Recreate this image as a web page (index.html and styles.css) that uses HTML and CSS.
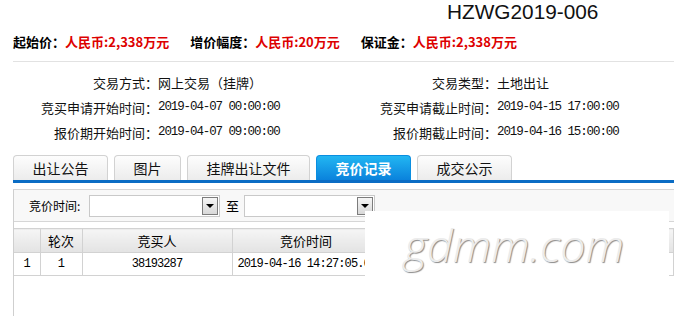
FILE: index.html
```html
<!DOCTYPE html>
<html lang="zh-CN">
<head>
    <meta charset="UTF-8">
    <title>竞价记录</title>
    <link rel="stylesheet" href="styles.css">
</head>
<body>
    <div class="page">
        <h1 class="code">HZWG2019-006</h1>

        <div class="prices">
            <span class="price"><b class="lbl">起始价：</b><b class="val">人民币:2,338万元</b></span>
            <span class="price"><b class="lbl">增价幅度：</b><b class="val">人民币:20万元</b></span>
            <span class="price"><b class="lbl">保证金：</b><b class="val">人民币:2,338万元</b></span>
        </div>

        <div class="info">
            <span class="k">交易方式：</span><span class="v">网上交易（挂牌）</span>
            <span class="k">交易类型：</span><span class="v">土地出让</span>
            <span class="k">竞买申请开始时间：</span><span class="v num">2019-04-07 00:00:00</span>
            <span class="k">竞买申请截止时间：</span><span class="v num">2019-04-15 17:00:00</span>
            <span class="k">报价期开始时间：</span><span class="v num">2019-04-07 09:00:00</span>
            <span class="k">报价期截止时间：</span><span class="v num">2019-04-16 15:00:00</span>
        </div>

        <div class="tabs">
            <a class="tab">出让公告</a>
            <a class="tab">图片</a>
            <a class="tab">挂牌出让文件</a>
            <a class="tab active">竞价记录</a>
            <a class="tab">成交公示</a>
        </div>

        <div class="panel">
            <div class="filter">
                <label>竞价时间:</label>
                <div class="combo"><span class="drop"></span></div>
                <span class="to">至</span>
                <div class="combo"><span class="drop"></span></div>
            </div>

            <table class="grid">
                <colgroup>
                    <col style="width:26px">
                    <col style="width:42px">
                    <col style="width:150px">
                    <col style="width:148px">
                    <col>
                </colgroup>
                <thead>
                    <tr><th></th><th>轮次</th><th>竞买人</th><th>竞价时间</th><th></th></tr>
                </thead>
                <tbody>
                    <tr><td>1</td><td>1</td><td>38193287</td><td class="time">2019-04-16 14:27:05.6</td><td></td></tr>
                </tbody>
            </table>
        </div>
    </div>

    <div class="mark">gdmm.com</div>
</body>
</html>
```

FILE: styles.css
```css
body {
    margin: 0;
    font-family: "Noto Sans CJK SC", sans-serif;
    font-size: 13px;
    color: #000;
    background: #fff;
    overflow: hidden;
}

.page {
    padding-left: 13px;
}

.code {
    margin: 0;
    padding-left: 434px;
    font: 400 20.8px/23px "Liberation Sans", Arial, sans-serif;
    color: #111;
}

.prices {
    display: flex;
    margin-top: 9px;
    line-height: 20px;
    padding-bottom: 9px;
    border-bottom: 1px solid #e2e2e2;
}

.price {
    margin-right: 21px;
}

.lbl {
    font-weight: bold;
}

.val {
    font-weight: bold;
    color: #d00;
}

.info {
    display: grid;
    grid-template-columns: 145px 180px 159px auto;
    margin-top: 8px;
    line-height: 25px;
    color: #111;
}

.info .k {
    text-align: right;
}

.num {
    font-family: "Liberation Mono", monospace;
    font-size: 12.5px;
    letter-spacing: -1.1px;
}

.tabs {
    display: flex;
    gap: 6px;
    margin-top: 10px;
    border-bottom: 3px solid #0a6cc4;
}

.tab {
    height: 24px;
    line-height: 24px;
    padding: 0 18.5px;
    font-size: 14px;
    color: #111;
    border: 1px solid #d2d2d2;
    border-bottom: none;
    border-radius: 4px 4px 0 0;
    background: linear-gradient(#fdfdfd, #ececec);
}

.tab.active {
    color: #fff;
    font-weight: bold;
    border-color: #0a8ee0;
    background: linear-gradient(#22b6f2, #0a82dc);
}

.panel {
    margin-top: 6px;
    border-left: 1px solid #cfcfcf;
    border-top: 1px solid #d6d6d6;
    height: 140px;
}

.filter {
    display: flex;
    align-items: center;
    height: 31px;
    padding-left: 15px;
    background: #f8f8f8;
    border-bottom: 1px solid #d6d6d6;
    font-size: 12px;
}

.filter label {
    width: 60px;
}

.combo {
    position: relative;
    box-sizing: border-box;
    width: 131px;
    height: 22px;
    background: #fff;
    border: 1px solid #c9c9c9;
}

.drop {
    position: absolute;
    right: 1px;
    top: 1px;
    box-sizing: border-box;
    width: 16px;
    height: 18px;
    border: 1px solid #7c7c7c;
    background: linear-gradient(#f6f6f6, #d8d8d8);
}

.drop::after {
    content: "";
    position: absolute;
    left: 3px;
    top: 6px;
    border-left: 4px solid transparent;
    border-right: 4px solid transparent;
    border-top: 4px solid #000;
}

.to {
    margin: 0 5px 0 6px;
    font-size: 13px;
}

.grid {
    margin-top: 6px;
    width: 100%;
    border-collapse: collapse;
    table-layout: fixed;
}

.grid th,
.grid td {
    border: 1px solid #d2d2d2;
    padding: 0;
    text-align: center;
    white-space: nowrap;
    overflow: hidden;
}

.grid th:first-child,
.grid td:first-child {
    border-left: none;
}

.grid th {
    height: 23px;
    font-weight: normal;
    font-size: 13px;
    background: linear-gradient(#f5f5f5, #e3e3e3);
}

.grid td {
    height: 22px;
    font-family: "Liberation Mono", monospace;
    font-size: 12px;
    letter-spacing: -0.9px;
}

.grid td.time {
    text-align: left;
    padding-left: 5px;
}

.mark {
    position: absolute;
    left: 365px;
    top: 211px;
    width: 304px;
    height: 110px;
    background: #fff;
    box-sizing: border-box;
    padding: 3px 0 0 39px;
    font: italic 300 45px "Open Sans", sans-serif;
    color: #ececec;
    text-shadow: 1px 1px 1px #8a8a8a;
}
```
